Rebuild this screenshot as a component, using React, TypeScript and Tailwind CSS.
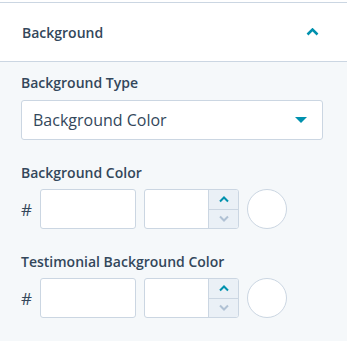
import React from "react";

const font = { fontFamily: "'Open Sans', 'Noto Sans', sans-serif" };

function ColorRow() {
  return (
    <div className="flex items-center h-[40px]">
      <span className="w-[19px] text-[17px] text-[#33475b] leading-none">#</span>
      <div className="w-[96px] h-[40px] bg-white border border-[#cbd6e2] rounded-[3px]" />
      <div className="ml-[8px] w-[95px] h-[40px] bg-white border border-[#cbd6e2] rounded-[3px] flex overflow-hidden">
        <div className="flex-1" />
        <div className="w-[30px] border-l border-[#cbd6e2] bg-[#eaf0f6] flex flex-col">
          <div className="flex-1 flex items-center justify-center border-b border-[#cbd6e2]">
            <svg width="10" height="7" viewBox="0 0 10 7" fill="none">
              <path d="M1 5.5 L5 1.5 L9 5.5" stroke="#0091ae" strokeWidth="2" />
            </svg>
          </div>
          <div className="flex-1 flex items-center justify-center">
            <svg width="10" height="7" viewBox="0 0 10 7" fill="none">
              <path d="M1 1.5 L5 5.5 L9 1.5" stroke="#b0c1d4" strokeWidth="2" />
            </svg>
          </div>
        </div>
      </div>
      <div className="ml-[8px] w-[40px] h-[40px] rounded-full bg-white border border-[#cbd6e2]" />
    </div>
  );
}

export default function App() {
  return (
    <div className="w-[347px] h-[341px] bg-white overflow-hidden" style={font}>
      <div className="h-[2px] bg-white" />
      <div className="h-[60px] border-t border-b border-[#cbd6e2] bg-white flex items-center justify-between pl-[22px] pr-[28px]">
        <span className="text-[14px] font-semibold text-[#33475b]">Background</span>
        <svg width="13" height="8" viewBox="0 0 13 8" fill="none">
          <path d="M1.5 6.5 L6.5 1.5 L11.5 6.5" stroke="#0091ae" strokeWidth="2.5" />
        </svg>
      </div>
      <div className="bg-[#f5f8fa] h-[279px] pl-[21px] pr-[24px] pt-[11px]">
        <div className="text-[14px] font-semibold text-[#33475b] leading-[20px] mb-[7px]">Background Type</div>
        <div className="h-[40px] bg-white border border-[#cbd6e2] rounded-[3px] flex items-center justify-between pl-[11px] pr-[15px]">
          <span className="text-[16px] text-[#33475b]">Background Color</span>
          <svg width="12" height="6" viewBox="0 0 12 6">
            <path d="M0 0 L12 0 L6 6 Z" fill="#0091ae" />
          </svg>
        </div>
        <div className="mt-[23px] text-[14px] font-semibold text-[#33475b] leading-[20px] mb-[6px]">Background Color</div>
        <ColorRow />
        <div className="mt-[23px] text-[14px] font-semibold text-[#33475b] leading-[20px] mb-[6px]">Testimonial Background Color</div>
        <ColorRow />
      </div>
    </div>
  );
}
